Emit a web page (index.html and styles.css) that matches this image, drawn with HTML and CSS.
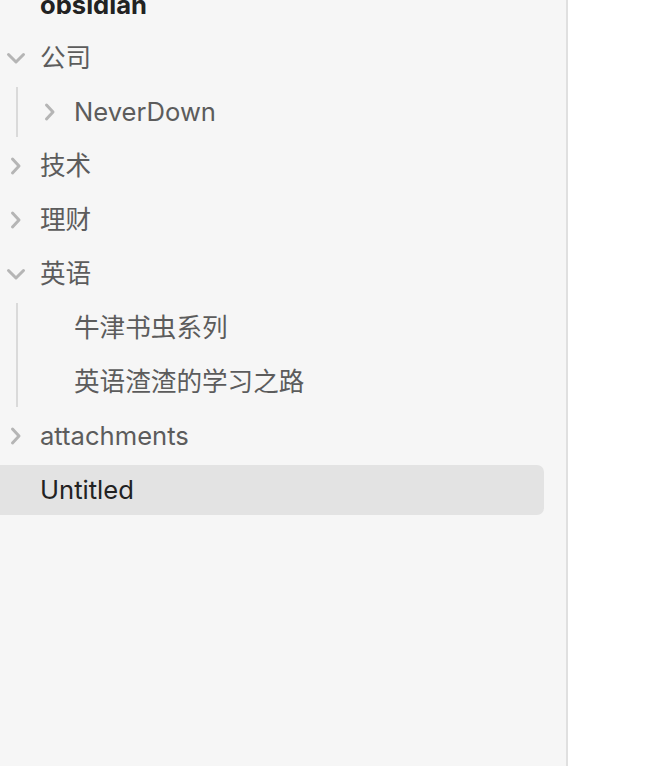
FILE: index.html
```html
<!DOCTYPE html>
<html lang="zh">
<head>
<meta charset="utf-8">
<link rel="stylesheet" href="styles.css">
</head>
<body>
<div class="app">
  <aside class="sidebar">
    <div class="tree">
      <div class="vault">obsidian</div>

      <div class="row"><span class="chev"><svg viewBox="0 0 24 24"><path d="M4.5 8.5l7.5 7.5 7.5-7.5"/></svg></span><span class="label">公司</span></div>
      <div class="children">
        <div class="row"><span class="chev"><svg viewBox="0 0 24 24"><path d="M8.5 5l6.5 7-6.5 7"/></svg></span><span class="label">NeverDown</span></div>
      </div>

      <div class="row"><span class="chev"><svg viewBox="0 0 24 24"><path d="M8.5 5l6.5 7-6.5 7"/></svg></span><span class="label">技术</span></div>
      <div class="row"><span class="chev"><svg viewBox="0 0 24 24"><path d="M8.5 5l6.5 7-6.5 7"/></svg></span><span class="label">理财</span></div>

      <div class="row"><span class="chev"><svg viewBox="0 0 24 24"><path d="M4.5 8.5l7.5 7.5 7.5-7.5"/></svg></span><span class="label">英语</span></div>
      <div class="children">
        <div class="row"><span class="chev"></span><span class="label">牛津书虫系列</span></div>
        <div class="row"><span class="chev"></span><span class="label">英语渣渣的学习之路</span></div>
      </div>

      <div class="row"><span class="chev"><svg viewBox="0 0 24 24"><path d="M8.5 5l6.5 7-6.5 7"/></svg></span><span class="label">attachments</span></div>
      <div class="row active"><span class="chev"></span><span class="label">Untitled</span></div>
    </div>
  </aside>
  <main class="content"></main>
</div>
</body>
</html>
```

FILE: styles.css
```css
* { box-sizing: border-box; }
html, body {
  margin: 0;
  padding: 0;
  height: 100%;
  overflow: hidden;
  background: #ffffff;
}
body {
  font-family: Inter, "Noto Sans CJK SC", sans-serif;
  font-size: 25.6px;
}
.app {
  display: flex;
  height: 766px;
}
.sidebar {
  width: 568px;
  flex: none;
  background: #f6f6f6;
  border-right: 2px solid #e0e0e0;
  overflow: hidden;
}
.content {
  flex: 1;
  background: #ffffff;
}
.tree {
  display: flex;
  flex-direction: column;
  gap: 4px;
  margin-top: -21px;
  padding-right: 22px;
}
.vault {
  height: 50px;
  display: flex;
  align-items: center;
  padding-left: 40px;
  font-weight: 700;
  color: #222222;
}
.row {
  height: 50px;
  display: flex;
  align-items: center;
  color: #5c5c5c;
  border-radius: 0 7px 7px 0;
}
.row.active {
  background: #e3e3e3;
  color: #222222;
}
.chev {
  width: 32px;
  height: 24px;
  flex: none;
  display: flex;
  align-items: center;
  justify-content: center;
  margin-right: 8px;
}
.chev svg {
  width: 24px;
  height: 24px;
  fill: none;
  stroke: #b5b5b5;
  stroke-width: 3;
  stroke-linecap: round;
  stroke-linejoin: round;
}
.label {
  white-space: nowrap;
  line-height: 1;
}
.children {
  margin-left: 16px;
  border-left: 2px solid #dadada;
  padding-left: 16px;
  display: flex;
  flex-direction: column;
  gap: 4px;
}
```
